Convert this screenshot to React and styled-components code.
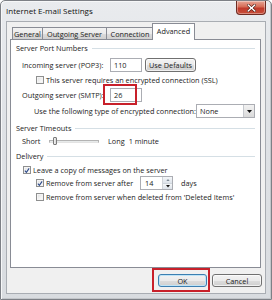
import React from 'react';
import styled, { createGlobalStyle } from 'styled-components';

const Global = createGlobalStyle`
  html, body { margin: 0; padding: 0; background: #fff; }
  body { font-family: "Open Sans", "Noto Sans", sans-serif; color: #1b1b1b; }
  * { box-sizing: border-box; }
`;

const Window = styled.div`
  width: 272px;
  height: 300px;
  display: flex;
  flex-direction: column;
  background: linear-gradient(180deg, #e9ebee 0%, #dfe2e6 40%, #d9dce0 100%);
  border: 1px solid #7d8086;
  border-radius: 5px 5px 0 0;
  box-shadow: inset 1px 1px 0 #f6f7f8, inset -1px -1px 0 #c3c6ca;
`;

const TitleBar = styled.div`
  height: 20px;
  display: flex;
  align-items: flex-start;
  flex: none;
`;

const Title = styled.div`
  padding-left: 5px;
  line-height: 19px;
  font-size: 8px;
  color: #111;
`;

const Close = styled.div`
  margin-left: auto;
  margin-right: 5px;
  width: 30px;
  height: 14px;
  border: 1px solid #6e2b22;
  border-top: none;
  border-radius: 0 0 4px 4px;
  background: linear-gradient(180deg, #e7a595 0%, #d66b55 45%, #c0392b 55%, #c8503a 100%);
  display: flex;
  align-items: center;
  justify-content: center;
  box-shadow: inset 0 0 0 1px rgba(255,255,255,0.35);
`;

const Client = styled.div`
  flex: 1;
  margin: 0 5px 5px 5px;
  border: 1px solid #a9adb3;
  background: #f0f0f0;
  padding: 2px 4px 0 3px;
  display: flex;
  flex-direction: column;
`;

const TabStrip = styled.div`
  display: flex;
  align-items: flex-end;
  height: 16px;
  padding-left: 2px;
  position: relative;
  z-index: 1;
  margin-bottom: -1px;
`;

const Tab = styled.div`
  width: ${p => p.w}px;
  height: ${p => (p.active ? 17 : 13)}px;
  margin-left: ${p => (p.active ? -2 : -1)}px;
  margin-right: ${p => (p.active ? -2 : 0)}px;
  border: 1px solid #898c95;
  border-bottom: ${p => (p.active ? 'none' : '1px solid #898c95')};
  background: ${p => (p.active ? '#fff' : 'linear-gradient(180deg, #f2f2f2 0%, #ebebeb 50%, #dddddd 51%, #cfcfcf 100%)')};
  font-size: 7.3px;
  display: flex;
  align-items: center;
  justify-content: center;
  padding-bottom: ${p => (p.active ? 3 : 0)}px;
  position: relative;
  z-index: ${p => (p.active ? 2 : 1)};
  &:first-child { margin-left: 0; }
`;

const Panel = styled.div`
  height: 229px;
  flex: none;
  border: 1px solid #898c95;
  background: #fff;
  padding: 1px 5px 0 5px;
  display: flex;
  flex-direction: column;
`;

const GroupHeader = styled.div`
  display: flex;
  align-items: center;
  height: 14px;
  margin-top: ${p => p.mt || 0}px;
  font-size: 7.3px;
  color: #222;
  gap: 4px;
  &::after {
    content: '';
    flex: 1;
    height: 1px;
    background: #d5dfe5;
  }
`;

const Row = styled.div`
  display: flex;
  align-items: center;
  height: ${p => p.h || 12}px;
  margin-top: ${p => p.mt || 0}px;
  padding-left: ${p => p.indent || 0}px;
  font-size: 7.3px;
  white-space: nowrap;
  position: relative;
`;

const Label = styled.span`
  width: ${p => (p.w ? `${p.w}px` : 'auto')};
  flex: none;
  margin-left: ${p => p.ml || 0}px;
`;

const TextBox = styled.div`
  width: ${p => p.w}px;
  height: 14px;
  border: 1px solid #abadb3;
  border-top-color: #abadb3;
  background: #fff;
  display: flex;
  align-items: center;
  padding-left: 3px;
  font-size: 7.3px;
  position: relative;
`;

const Highlight = styled.div`
  position: absolute;
  left: ${p => p.l}px;
  top: ${p => p.t}px;
  width: ${p => p.w}px;
  height: ${p => p.h}px;
  border: 2px solid #c8202a;
  pointer-events: none;
`;

const Button = styled.div`
  width: ${p => p.w}px;
  height: ${p => p.h || 14}px;
  margin-left: ${p => p.ml || 0}px;
  border: 1px solid ${p => (p.def ? '#3c7fb1' : '#707070')};
  border-radius: 3px;
  background: linear-gradient(180deg, #f2f2f2 0%, #ebebeb 50%, #dddddd 51%, #cfcfcf 100%);
  box-shadow: inset 0 0 0 1px ${p => (p.def ? '#bfe4f7' : 'rgba(255,255,255,0.7)')};
  font-size: 7.3px;
  display: flex;
  align-items: center;
  justify-content: center;
  flex: none;
  position: relative;
`;

const Check = styled.div`
  width: 8px;
  height: 8px;
  flex: none;
  border: 1px solid #8e8f8f;
  background: linear-gradient(135deg, #dcdcdc 0%, #f4f4f4 60%, #fff 100%);
  box-shadow: inset 0 0 0 1px #f4f4f4;
  display: flex;
  align-items: center;
  justify-content: center;
  margin-right: 2px;
`;

const Select = styled.div`
  width: 59px;
  height: 14px;
  margin-left: auto;
  border: 1px solid #abadb3;
  background: #fff;
  display: flex;
  align-items: center;
  padding-left: 3px;
  font-size: 7.3px;
`;

const DropBtn = styled.div`
  margin-left: auto;
  width: 11px;
  height: 12px;
  border-left: 1px solid #c6c9ce;
  background: linear-gradient(180deg, #f2f2f2 0%, #e6e6e6 50%, #dadada 100%);
  display: flex;
  align-items: center;
  justify-content: center;
`;

const Slider = styled.div`
  width: 50px;
  height: 12px;
  margin-left: 6px;
  position: relative;
  flex: none;
  display: flex;
  align-items: center;
`;

const Track = styled.div`
  width: 100%;
  height: 3px;
  border: 1px solid #b3b3b3;
  border-bottom-color: #e3e3e3;
  background: #e7eaea;
`;

const Thumb = styled.div`
  position: absolute;
  left: 4px;
  top: 2px;
  width: 4px;
  height: 8px;
  border: 1px solid #7a7a7a;
  border-radius: 1px;
  background: linear-gradient(90deg, #f4f4f4, #d8d8d8);
`;

const Spinner = styled.div`
  width: 33px;
  height: 14px;
  border: 1px solid #abadb3;
  background: #fff;
  display: flex;
  align-items: center;
  padding-left: 4px;
  font-size: 7.3px;
  margin-left: 18px;
`;

const SpinBtns = styled.div`
  margin-left: auto;
  width: 10px;
  height: 12px;
  display: flex;
  flex-direction: column;
  border-left: 1px solid #d0d3d8;
`;

const SpinHalf = styled.div`
  flex: 1;
  background: linear-gradient(180deg, #f4f6f8, #dde3ea);
  display: flex;
  align-items: center;
  justify-content: center;
  border-bottom: ${p => (p.top ? '1px solid #cfd5db' : 'none')};
`;

const ButtonRow = styled.div`
  display: flex;
  justify-content: flex-end;
  margin-top: 6px;
  margin-right: -1px;
  position: relative;
`;

const CheckMark = () => (
  <svg width="7" height="7" viewBox="0 0 7 7">
    <path d="M1 3.6 L2.8 5.6 L6 1" fill="none" stroke="#2c4a8a" strokeWidth="1.3" />
  </svg>
);

const Tri = ({ up, size = 5 }) => (
  <svg width={size} height={size / 2 + 0.5} viewBox="0 0 5 3">
    <path d={up ? 'M0 3 L2.5 0 L5 3 Z' : 'M0 0 L5 0 L2.5 3 Z'} fill={up ? '#7d8894' : '#111'} />
  </svg>
);

export default function App() {
  return (
    <>
      <Global />
      <Window>
        <TitleBar>
          <Title>Internet E-mail Settings</Title>
          <Close>
            <svg width="9" height="8" viewBox="0 0 9 8">
              <path d="M1.2 1 L7.8 7 M7.8 1 L1.2 7" stroke="#4a1a12" strokeWidth="2.6" strokeLinecap="round" />
              <path d="M1.2 1 L7.8 7 M7.8 1 L1.2 7" stroke="#fff" strokeWidth="1.5" strokeLinecap="round" />
            </svg>
          </Close>
        </TitleBar>
        <Client>
          <TabStrip>
            <Tab w={31}>General</Tab>
            <Tab w={65}>Outgoing Server</Tab>
            <Tab w={48}>Connection</Tab>
            <Tab w={43} active>Advanced</Tab>
          </TabStrip>
          <Panel>
            <GroupHeader>Server Port Numbers</GroupHeader>
            <Row h={14} mt={3} indent={6}>
              <Label w={88}>Incoming server (POP3):</Label>
              <TextBox w={32}>110</TextBox>
              <Button w={51} ml={3}>Use Defaults</Button>
            </Row>
            <Row h={10} mt={3} indent={20}>
              <Check />
              <Label>This server requires an encrypted connection (SSL)</Label>
            </Row>
            <Row h={14} mt={3} indent={6}>
              <Label w={88}>Outgoing server (SMTP):</Label>
              <TextBox w={32}>26</TextBox>
              <Highlight l={87} t={-4} w={34} h={21} />
            </Row>
            <Row h={14} mt={2} indent={18}>
              <Label>Use the following type of encrypted connection:</Label>
              <Select>
                None
                <DropBtn><Tri /></DropBtn>
              </Select>
            </Row>
            <GroupHeader mt={3}>Server Timeouts</GroupHeader>
            <Row h={12} indent={6}>
              <Label w={21}>Short</Label>
              <Slider>
                <Track />
                <Thumb />
              </Slider>
              <Label ml={9}>Long</Label>
              <Label ml={4}>1 minute</Label>
            </Row>
            <GroupHeader mt={2}>Delivery</GroupHeader>
            <Row h={12} mt={1} indent={7}>
              <Check><CheckMark /></Check>
              <Label>Leave a copy of messages on the server</Label>
            </Row>
            <Row h={14} indent={20}>
              <Check><CheckMark /></Check>
              <Label w={76}>Remove from server after</Label>
              <Spinner>
                14
                <SpinBtns>
                  <SpinHalf top><Tri up size={4} /></SpinHalf>
                  <SpinHalf><Tri size={4} /></SpinHalf>
                </SpinBtns>
              </Spinner>
              <Label ml={8}>days</Label>
            </Row>
            <Row h={12} mt={1} indent={20}>
              <Check />
              <Label>Remove from server when deleted from 'Deleted Items'</Label>
            </Row>
          </Panel>
          <ButtonRow>
            <Button w={49} h={13} def>
              OK
              <Highlight l={-7} t={-7} w={58} h={24} />
            </Button>
            <Button w={50} h={13} ml={5}>Cancel</Button>
          </ButtonRow>
        </Client>
      </Window>
    </>
  );
}
